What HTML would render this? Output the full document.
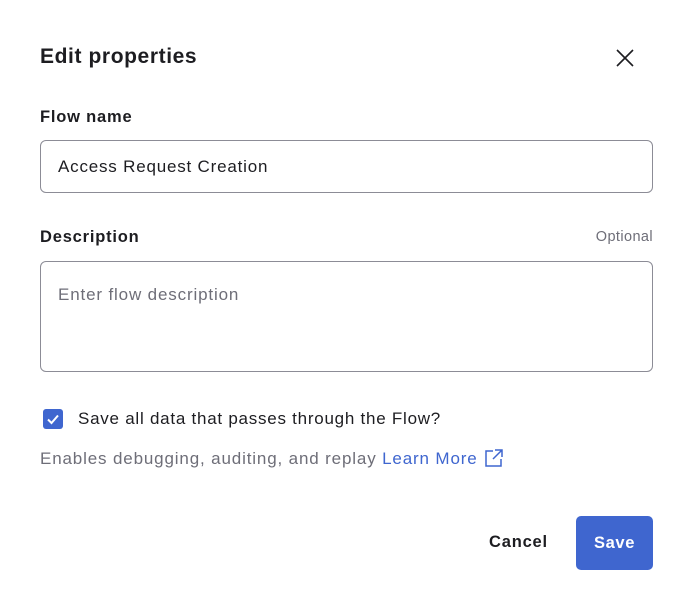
<!DOCTYPE html>
<html><head><style>
body{margin:0;width:695px;height:612px;background:#fff;font-family:"Liberation Sans",sans-serif;color:#1d1d21;position:relative;overflow:hidden}
.a{position:absolute;white-space:nowrap}
.t{font-size:17px;letter-spacing:0.8px}
.b{font-size:16.5px;font-weight:bold;letter-spacing:0.8px}
.inp{position:absolute;left:40px;width:613px;border:1px solid #8c8c96;border-radius:6px;box-sizing:border-box}
</style></head><body>
<div class="a" style="left:40px;top:45px;font-size:21px;font-weight:bold;letter-spacing:0.6px">Edit properties</div>
<svg class="a" style="left:615px;top:48px" width="20" height="20" viewBox="0 0 20 20"><path d="M2 2L18 18M18 2L2 18" stroke="#1d1d21" stroke-width="1.6"/></svg>
<div class="a b" style="left:40px;top:108px">Flow name</div>
<div class="inp" style="top:140px;height:53px"><span class="a t" style="left:17px;top:16px">Access Request Creation</span></div>
<div class="a b" style="left:40px;top:228px">Description</div>
<div class="a" style="right:42px;top:229px;font-size:14.5px;color:#6e6e78;letter-spacing:0.4px">Optional</div>
<div class="inp" style="top:261px;height:111px"><span class="a t" style="left:17px;top:23px;color:#6e6e78;letter-spacing:0.85px">Enter flow description</span></div>
<div class="a" style="left:43px;top:409px;width:20px;height:20px;background:#3f66cf;border-radius:3px"><svg width="20" height="20"><path d="M5 10.5L8.5 14L15 6.5" stroke="#fff" stroke-width="2" fill="none"/></svg></div>
<div class="a t" style="left:78px;top:409px;letter-spacing:0.75px">Save all data that passes through the Flow?</div>
<div class="a t" style="left:40px;top:449px;color:#6e6e78;letter-spacing:0.85px">Enables debugging, auditing, and replay <span style="color:#3f66cf">Learn More</span></div>
<svg class="a" style="left:484px;top:448px" width="20" height="20" viewBox="0 0 20 20"><path d="M9 3H2V18H17V11M11 2H18V9M18 2L9 11" stroke="#3f66cf" stroke-width="1.5" fill="none"/></svg>
<div class="a b" style="left:489px;top:533px">Cancel</div>
<div class="a" style="left:576px;top:516px;width:77px;height:54px;background:#3f66cf;border-radius:5px;color:#fff;font-size:16.5px;font-weight:bold;letter-spacing:0.6px;text-align:center;line-height:54px">Save</div>
</body></html>
